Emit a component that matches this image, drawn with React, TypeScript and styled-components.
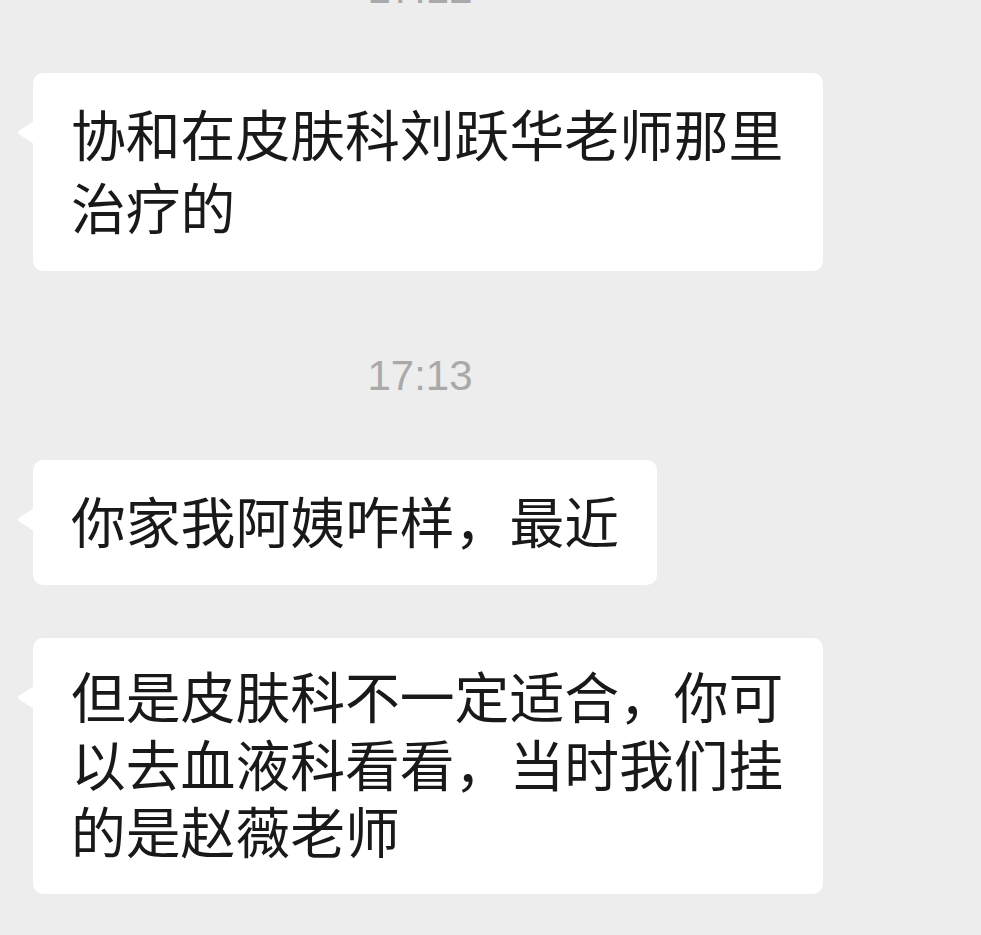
import { FC, Fragment } from 'react';
import styled, { createGlobalStyle } from 'styled-components';

const GlobalStyle = createGlobalStyle`
  html, body {
    margin: 0;
    padding: 0;
    background: #ededed;
  }

  * {
    box-sizing: border-box;
  }
`;

const Page = styled.div`
  min-height: 100vh;
  overflow: hidden;
  background: #ededed;
`;

const Chat = styled.div`
  display: flex;
  flex-direction: column;
  align-items: flex-start;
  width: 840px;
  margin-top: -32px;
  padding-left: 33px;
`;

// bubbles already carry 53px below them, so the gap above a time is smaller
const Time = styled.div<{ $first?: boolean }>`
  align-self: stretch;
  margin: ${({ $first }) => ($first ? '0 0 63px' : '31px 0 63px')};
  margin-left: -33px;
  font-family: 'Liberation Sans', Arial, sans-serif;
  font-size: 42px;
  line-height: 42px;
  color: #a9a9a9;
  text-align: center;
`;

const Bubble = styled.div<{ $lead: number }>`
  position: relative;
  width: fit-content;
  max-width: 790px;
  margin-bottom: 53px;
  padding: 23px 38px 30px;
  background: #fff;
  border-radius: 10px;
  font-family: 'Noto Sans CJK SC', 'Noto Sans', sans-serif;
  font-size: 54.8px;
  line-height: ${({ $lead }) => $lead}px;
  color: #191919;

  /* left tail */
  &::before {
    content: '';
    position: absolute;
    left: -16px;
    top: 48px;
    width: 17px;
    height: 23px;
    background: #fff;
    clip-path: path('M17 0 L1.6 10 Q0 11.5 1.6 13 L17 23 Z');
  }
`;

interface Message {
  time?: string;
  text: string;
  lead: number;
}

const messages: Message[] = [
  { time: '17:12', text: '协和在皮肤科刘跃华老师那里治疗的', lead: 72.5 },
  { time: '17:13', text: '你家我阿姨咋样，最近', lead: 72 },
  { text: '但是皮肤科不一定适合，你可以去血液科看看，当时我们挂的是赵薇老师', lead: 67.5 },
];

const App: FC = () => (
  <Page>
    <GlobalStyle />
    <Chat>
      {messages.map((msg, i) => (
        <Fragment key={i}>
          {msg.time && <Time $first={i === 0}>{msg.time}</Time>}
          <Bubble $lead={msg.lead}>{msg.text}</Bubble>
        </Fragment>
      ))}
    </Chat>
  </Page>
);

export default App;
